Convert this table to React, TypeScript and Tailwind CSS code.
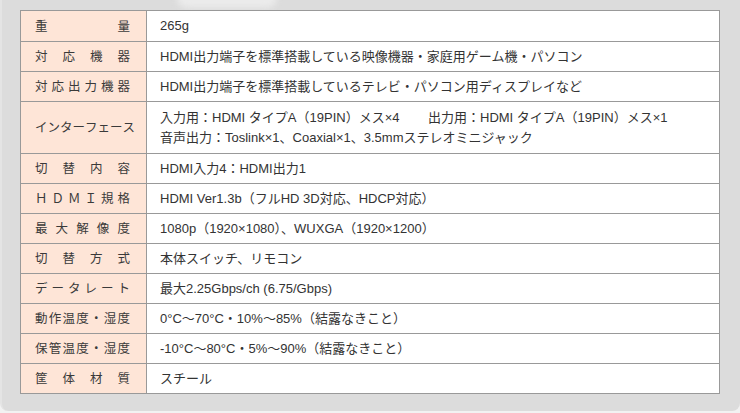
import React from 'react';

const font = { fontFamily: '"Liberation Sans", "Noto Sans CJK JP", sans-serif' };
const labelFont = { fontFamily: '"Noto Sans CJK JP", sans-serif' };

const specs: { label: string; value: React.ReactNode; tall?: boolean }[] = [
  { label: '重量', value: '265g' },
  { label: '対応機器', value: 'HDMI出力端子を標準搭載している映像機器・家庭用ゲーム機・パソコン' },
  { label: '対応出力機器', value: 'HDMI出力端子を標準搭載しているテレビ・パソコン用ディスプレイなど' },
  {
    label: 'インターフェース',
    tall: true,
    value: (
      <div className="flex flex-col gap-[1px]">
        <div className="flex">
          <span className="w-[268px]">入力用：HDMI タイプA（19PIN）メス×4</span>
          <span>出力用：HDMI タイプA（19PIN）メス×1</span>
        </div>
        <div>音声出力：Toslink×1、Coaxial×1、3.5mmステレオミニジャック</div>
      </div>
    ),
  },
  { label: '切替内容', value: 'HDMI入力4：HDMI出力1' },
  { label: 'ＨＤＭＩ規格', value: 'HDMI Ver1.3b（フルHD 3D対応、HDCP対応）' },
  { label: '最大解像度', value: '1080p（1920×1080）、WUXGA（1920×1200）' },
  { label: '切替方式', value: '本体スイッチ、リモコン' },
  { label: 'データレート', value: '最大2.25Gbps/ch (6.75/Gbps)' },
  { label: '動作温度・湿度', value: '0°C〜70°C・10%〜85%（結露なきこと）' },
  { label: '保管温度・湿度', value: '-10°C〜80°C・5%〜90%（結露なきこと）' },
  { label: '筐体材質', value: 'スチール' },
];

export default function App() {
  return (
    <div className="w-[740px] h-[413px] bg-[#f2f2f2]" style={font}>
      <div className="relative w-[740px] h-[411px] bg-[#dcdcdc] rounded-b-[8px] border-l-2 border-[#e4e4e4] px-[18px] pt-[10px] overflow-hidden">
        {/* faint glow above the table */}
        <div className="absolute left-[175px] top-[-12px] w-[100px] h-[20px] rounded-full bg-[#ebebeb] blur-[3px]"></div>

        <div className="relative w-[700px] border border-[#999] bg-white">
          {specs.map((row, i) => (
            <div
              key={i}
              className={`flex ${i > 0 ? 'border-t border-[#999]' : ''} ${row.tall ? 'h-[52px]' : 'h-[30px]'}`}
            >
              <div
                className="w-[126px] shrink-0 bg-[#fee5d7] border-r border-[#999] pl-[14px] pr-[16px] flex items-center text-[12.5px] text-[#3a3a3a]"
                style={labelFont}
              >
                <div className="flex-1 flex justify-between">
                  {Array.from(row.label).map((ch, j) => (
                    <span key={j}>{ch}</span>
                  ))}
                </div>
              </div>
              <div className="flex-1 flex items-center pl-[13px] text-[13px] text-[#333]">
                {row.value}
              </div>
            </div>
          ))}
        </div>
      </div>
    </div>
  );
}
